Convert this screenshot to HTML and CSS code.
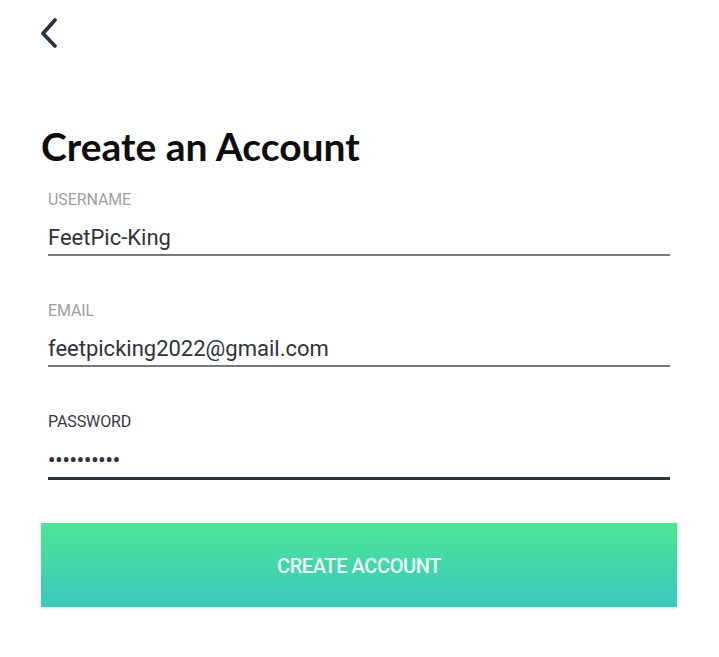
FILE: index.html
```html
<!DOCTYPE html>
<html lang="en">
<head>
<meta charset="utf-8">
<title>Create an Account</title>
<link rel="stylesheet" href="styles.css">
</head>
<body>
<div class="screen">
  <header class="topbar">
    <button class="back" aria-label="Back">
      <svg width="24" height="40" viewBox="0 0 24 40" fill="none">
        <path d="M17 6 L5 19.5 L17 32" stroke="#2b333d" stroke-width="3.8" stroke-linecap="round" stroke-linejoin="round"/>
      </svg>
    </button>
  </header>
  <h1 class="title">Create an Account</h1>
  <form class="form">
    <div class="field">
      <label class="label">USERNAME</label>
      <div class="value">FeetPic-King</div>
    </div>
    <div class="field">
      <label class="label">EMAIL</label>
      <div class="value">feetpicking2022@gmail.com</div>
    </div>
    <div class="field focused">
      <label class="label">PASSWORD</label>
      <div class="value dots">••••••••••</div>
    </div>
  </form>
  <div class="actions">
    <button class="cta" type="button">CREATE ACCOUNT</button>
  </div>
</div>
</body>
</html>
```
FILE: styles.css
```css
html, body {
  margin: 0;
  padding: 0;
  background: #ffffff;
}
.screen {
  width: 719px;
  min-height: 657px;
  display: flex;
  flex-direction: column;
  font-family: Roboto, "Liberation Sans", sans-serif;
}
.topbar {
  height: 60px;
  padding: 14px 0 0 38px;
  box-sizing: border-box;
}
.back {
  border: 0;
  background: none;
  padding: 0;
  display: block;
}
.back svg {
  display: block;
}
.title {
  margin: 64px 0 0 41px;
  font-family: Lato, "Noto Sans", sans-serif;
  font-weight: 700;
  font-size: 39px;
  line-height: 44px;
  color: #0d0d0d;
}
.form {
  display: flex;
  flex-direction: column;
  gap: 45px;
  margin: 22px 49px 0 48px;
}
.field {
  display: flex;
  flex-direction: column;
  border-bottom: 2px solid #7a7a7a;
}
.label {
  font-size: 16px;
  line-height: 20px;
  color: #a0a0a0;
  font-weight: 400;
  letter-spacing: -0.1px;
}
.value {
  font-size: 22px;
  line-height: 26px;
  color: #2f3338;
  margin-top: 15px;
  padding-bottom: 3px;
}
.focused {
  border-bottom: 3px solid #2b333d;
}
.focused .label {
  color: #333a40;
}
.focused .value {
  padding-bottom: 4px;
}
.dots {
  font-size: 20px;
  font-weight: 700;
}
.actions {
  margin: 43px 42px 0 41px;
}
.cta {
  display: block;
  width: 100%;
  height: 84px;
  padding-top: 2px;
  border: 0;
  border-radius: 0;
  background: linear-gradient(#4ae793, #3cc6bf);
  box-shadow: 0 1px 3px rgba(0, 0, 0, 0.18);
  color: #eefef8;
  font-family: Roboto, "Liberation Sans", sans-serif;
  font-weight: 500;
  font-size: 20px;
  letter-spacing: -0.4px;
}
```
